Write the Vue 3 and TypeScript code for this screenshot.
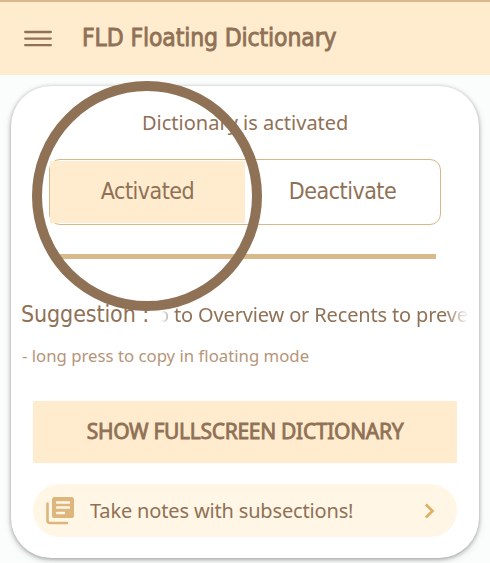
<script setup lang="ts">
import { ref } from 'vue'

const active = ref<boolean>(true)
const title: string = 'FLD Floating Dictionary'
</script>

<template>
  <div class="screen">
    <header class="bar">
      <svg class="menu" width="28" height="17" viewBox="0 0 28 17">
        <path d="M1.2 2H26.8M1.2 8.6H26.8M1.2 15.2H26.8" />
      </svg>
      <h1 class="title">{{ title }}</h1>
    </header>
    <main class="card">
      <p class="status"><span>Dictionary is activated</span></p>
      <div class="segments">
        <button class="segment first" :class="{ on: active }" @click="active = true"><span>Activated</span></button>
        <button class="segment second" :class="{ on: !active }" @click="active = false"><span>Deactivate</span></button>
      </div>
      <div class="divider"></div>
      <div class="suggestion">
        <span class="label">Suggestion :</span>
        <div class="marquee"><span>o to Overview or Recents to preve</span></div>
      </div>
      <p class="hint"><span>- long press to copy in floating mode</span></p>
      <button class="full"><span>SHOW FULLSCREEN DICTIONARY</span></button>
      <button class="notes">
        <svg class="book" width="28" height="28" viewBox="0 0 28 28">
          <path class="line" d="M1.5 6.5V23.5Q1.5 26 4 26H21" />
          <rect x="6" y="0" width="22" height="21" rx="2.6" />
          <path class="gap" d="M11 5.5H23M11 10.5H23M11 16H18" />
        </svg>
        <span class="notes-text">Take notes with subsections!</span>
        <svg class="chevron" width="11" height="16" viewBox="0 0 11 16">
          <path d="M1.8 1.5L8.5 8L1.8 14.5" />
        </svg>
      </button>
      <div class="ring"></div>
    </main>
  </div>
</template>

<style>
body {
  margin: 0;
  background: #fbfcfc;
}
</style>

<style scoped>
.screen {
  width: 490px;
  height: 563px;
  overflow: hidden;
  box-sizing: border-box;
  background: #fbfcfc;
  color: #8f7156;
  font-family: "Noto Sans", "Open Sans", sans-serif;
}
button {
  border: 0;
  padding: 0;
  margin: 0;
  color: inherit;
  background: none;
  font: inherit;
}
p, h1 { margin: 0; white-space: nowrap; }
.bar {
  box-sizing: border-box;
  height: 75px;
  border-top: 2px solid #dab88b;
  background: #ffebcd;
  display: flex;
  align-items: center;
  padding-left: 24px;
}
.menu path {
  fill: none;
  stroke: #8f7156;
  stroke-width: 2.3;
  stroke-linecap: round;
}
.title {
  margin-left: 30px;
  padding-bottom: 1px;
  font: 400 24.5px/30px "DejaVu Sans Condensed", "DejaVu Sans", sans-serif;
  font-stretch: condensed;
  letter-spacing: -0.13px;
  -webkit-text-stroke: 0.8px #8f7156;
}
.card {
  position: relative;
  box-sizing: border-box;
  width: 468px;
  height: 472px;
  margin: 11px 0 0 11px;
  border-radius: 40px;
  background: #fff;
  box-shadow: 0 1px 4px rgba(0, 0, 0, 0.34), 0 3px 9px rgba(0, 0, 0, 0.1);
  display: flex;
  flex-direction: column;
}
.status {
  margin: 23px 0 0 131px;
  font-size: 20px;
  line-height: 28px;
}
.segments {
  box-sizing: border-box;
  width: 392px;
  height: 66px;
  margin: 22px 0 0 38px;
  padding: 1px 0;
  border: 1px solid #d8b68a;
  border-radius: 11px;
  display: flex;
}
.segment {
  width: 195px;
  height: 62px;
  padding-bottom: 3px;
  font: 400 23px/28px "DejaVu Sans Condensed", "DejaVu Sans", sans-serif;
  font-stretch: condensed;
  letter-spacing: -0.5px;
}
.segment.on { background: #ffebcd; }
.divider {
  width: 381px;
  height: 5px;
  margin: 29px 0 0 44px;
  background: #d9b88b;
}
.suggestion {
  display: flex;
  height: 34px;
  margin: 40px 0 0 10px;
}
.label {
  width: 136px;
  font: 400 23px/31px "DejaVu Sans Condensed", "DejaVu Sans", sans-serif;
  font-stretch: condensed;
  letter-spacing: -0.1px;
  white-space: pre;
}
.marquee {
  width: 312px;
  display: flex;
  font-size: 20px;
  line-height: 32px;
  letter-spacing: -0.15px;
  white-space: nowrap;
  mask-image: linear-gradient(90deg, transparent 4px, #000 18px, #000 288px, transparent 312px);
}
.hint {
  margin: 12px 0 0 11px;
  font-size: 16.75px;
  line-height: 22px;
  color: #b6957a;
}
.full {
  width: 424px;
  height: 62px;
  margin: 34px 0 0 22px;
  padding-bottom: 2px;
  background: #ffebcd;
  font-size: 21px;
  line-height: 28px;
  letter-spacing: -0.3px;
  white-space: nowrap;
  -webkit-text-stroke: 0.8px #8f7156;
}
.notes {
  box-sizing: border-box;
  width: 424px;
  height: 53px;
  margin: 21px 0 0 22px;
  padding: 0 22px 0 13px;
  border-radius: 27px;
  background: #fff6e5;
  display: flex;
  align-items: center;
}
.book { fill: #dcb67c; }
.book .line {
  fill: none;
  stroke: #dcb67c;
  stroke-width: 2.6;
  stroke-linecap: round;
}
.book .gap {
  fill: none;
  stroke: #fff6e5;
  stroke-width: 2.4;
  stroke-linecap: round;
}
.notes-text {
  flex: 1;
  margin-left: 16px;
  text-align: left;
  font-size: 20px;
  line-height: 28px;
  letter-spacing: -0.16px;
}
.chevron path {
  fill: none;
  stroke: #dcb067;
  stroke-width: 2.7;
}
.ring {
  position: absolute;
  left: 21px;
  top: -5px;
  box-sizing: border-box;
  width: 230px;
  height: 230px;
  border: 10px solid #8f7156;
  border-radius: 50%;
  pointer-events: none;
}
</style>
